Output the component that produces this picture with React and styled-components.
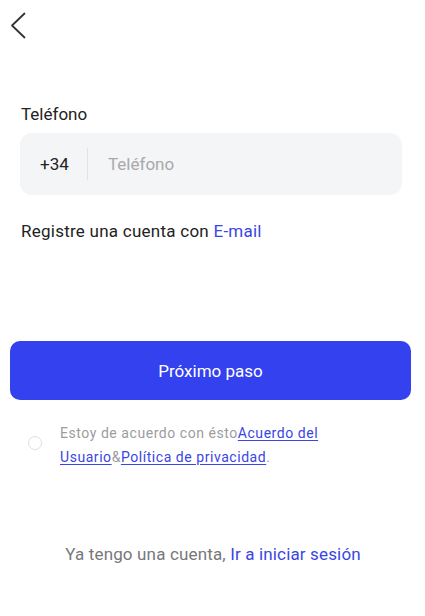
import React from "react";
import styled, { createGlobalStyle } from "styled-components";

const GlobalStyle = createGlobalStyle`
  html, body {
    margin: 0;
    padding: 0;
    background: #ffffff;
  }
  body {
    font-family: Roboto, "Noto Sans", sans-serif;
    -webkit-font-smoothing: antialiased;
  }
`;

const Page = styled.div`
  width: 425px;
  min-height: 616px;
  display: flex;
  flex-direction: column;
  box-sizing: border-box;
`;

const Header = styled.div`
  height: 52px;
  display: flex;
  align-items: flex-start;
  padding: 12px 0 0 9px;
  box-sizing: border-box;
`;

const BackButton = styled.button`
  border: 0;
  background: none;
  padding: 0;
  width: 20px;
  height: 28px;
  cursor: pointer;
  color: #333333;
`;

const Form = styled.div`
  display: flex;
  flex-direction: column;
  padding: 51px 23px 0 20px;
`;

const Label = styled.div`
  font-size: 17px;
  line-height: 22px;
  color: #222222;
  margin-left: 1px;
`;

const InputBox = styled.div`
  margin-top: 8px;
  height: 62px;
  background: #f4f5f7;
  border-radius: 12px;
  display: flex;
  align-items: center;
`;

const Prefix = styled.div`
  width: 68px;
  padding-left: 20px;
  box-sizing: border-box;
  font-size: 17px;
  color: #222222;
  height: 32px;
  line-height: 32px;
  border-right: 1px solid #e2e3e6;
`;

const Input = styled.input`
  flex: 1;
  min-width: 0;
  border: 0;
  background: transparent;
  outline: none;
  font-family: inherit;
  font-size: 17px;
  color: #222222;
  padding: 0 0 0 20px;

  &::placeholder {
    color: #a9a9ab;
  }
`;

const SwitchLine = styled.div`
  margin-top: 25px;
  margin-left: 1px;
  font-size: 17px;
  line-height: 22px;
  letter-spacing: 0.25px;
  color: #222222;
`;

const Link = styled.a`
  color: #3a45e6;
  text-decoration: ${(p) => (p.$underline ? "underline" : "none")};
  text-underline-offset: 2px;
  cursor: pointer;
`;

const Actions = styled.div`
  display: flex;
  flex-direction: column;
  padding: 99px 14px 0 10px;
`;

const PrimaryButton = styled.button`
  height: 59px;
  width: 100%;
  border: 0;
  border-radius: 10px;
  background: #3341ee;
  color: #ffffff;
  font-family: inherit;
  font-size: 17px;
  cursor: pointer;
`;

const Agreement = styled.div`
  display: flex;
  align-items: flex-start;
  margin-top: 21px;
  padding-left: 18px;
`;

const Radio = styled.span`
  margin-top: 15px;
  width: 14px;
  height: 14px;
  border-radius: 50%;
  border: 1.5px solid #e0e0e2;
  box-sizing: border-box;
  flex-shrink: 0;
`;

const AgreementText = styled.div`
  margin-left: 18px;
  width: 290px;
  font-size: 14px;
  line-height: 24px;
  letter-spacing: 0.55px;
  color: #9c9ca0;
`;

const Footer = styled.div`
  margin-top: 74px;
  text-align: center;
  font-size: 17px;
  line-height: 22px;
  letter-spacing: 0.15px;
  color: #77777a;
  padding-left: 1px;
`;

function BackIcon() {
  return (
    <svg width="20" height="28" viewBox="0 0 20 28" fill="none">
      <path
        d="M15.5 1.5 L3 13.5 L15.5 25.5"
        stroke="currentColor"
        strokeWidth="1.8"
        strokeLinecap="round"
        strokeLinejoin="round"
      />
    </svg>
  );
}

export default function App() {
  return (
    <Page>
      <GlobalStyle />
      <Header>
        <BackButton aria-label="Volver">
          <BackIcon />
        </BackButton>
      </Header>
      <Form>
        <Label>Teléfono</Label>
        <InputBox>
          <Prefix>+34</Prefix>
          <Input placeholder="Teléfono" />
        </InputBox>
        <SwitchLine>
          Registre una cuenta con <Link>E-mail</Link>
        </SwitchLine>
      </Form>
      <Actions>
        <PrimaryButton>Próximo paso</PrimaryButton>
        <Agreement>
          <Radio />
          <AgreementText>
            Estoy de acuerdo con ésto<Link $underline>Acuerdo del Usuario</Link>&amp;
            <Link $underline>Política de privacidad</Link>.
          </AgreementText>
        </Agreement>
      </Actions>
      <Footer>
        Ya tengo una cuenta, <Link>Ir a iniciar sesión</Link>
      </Footer>
    </Page>
  );
}
